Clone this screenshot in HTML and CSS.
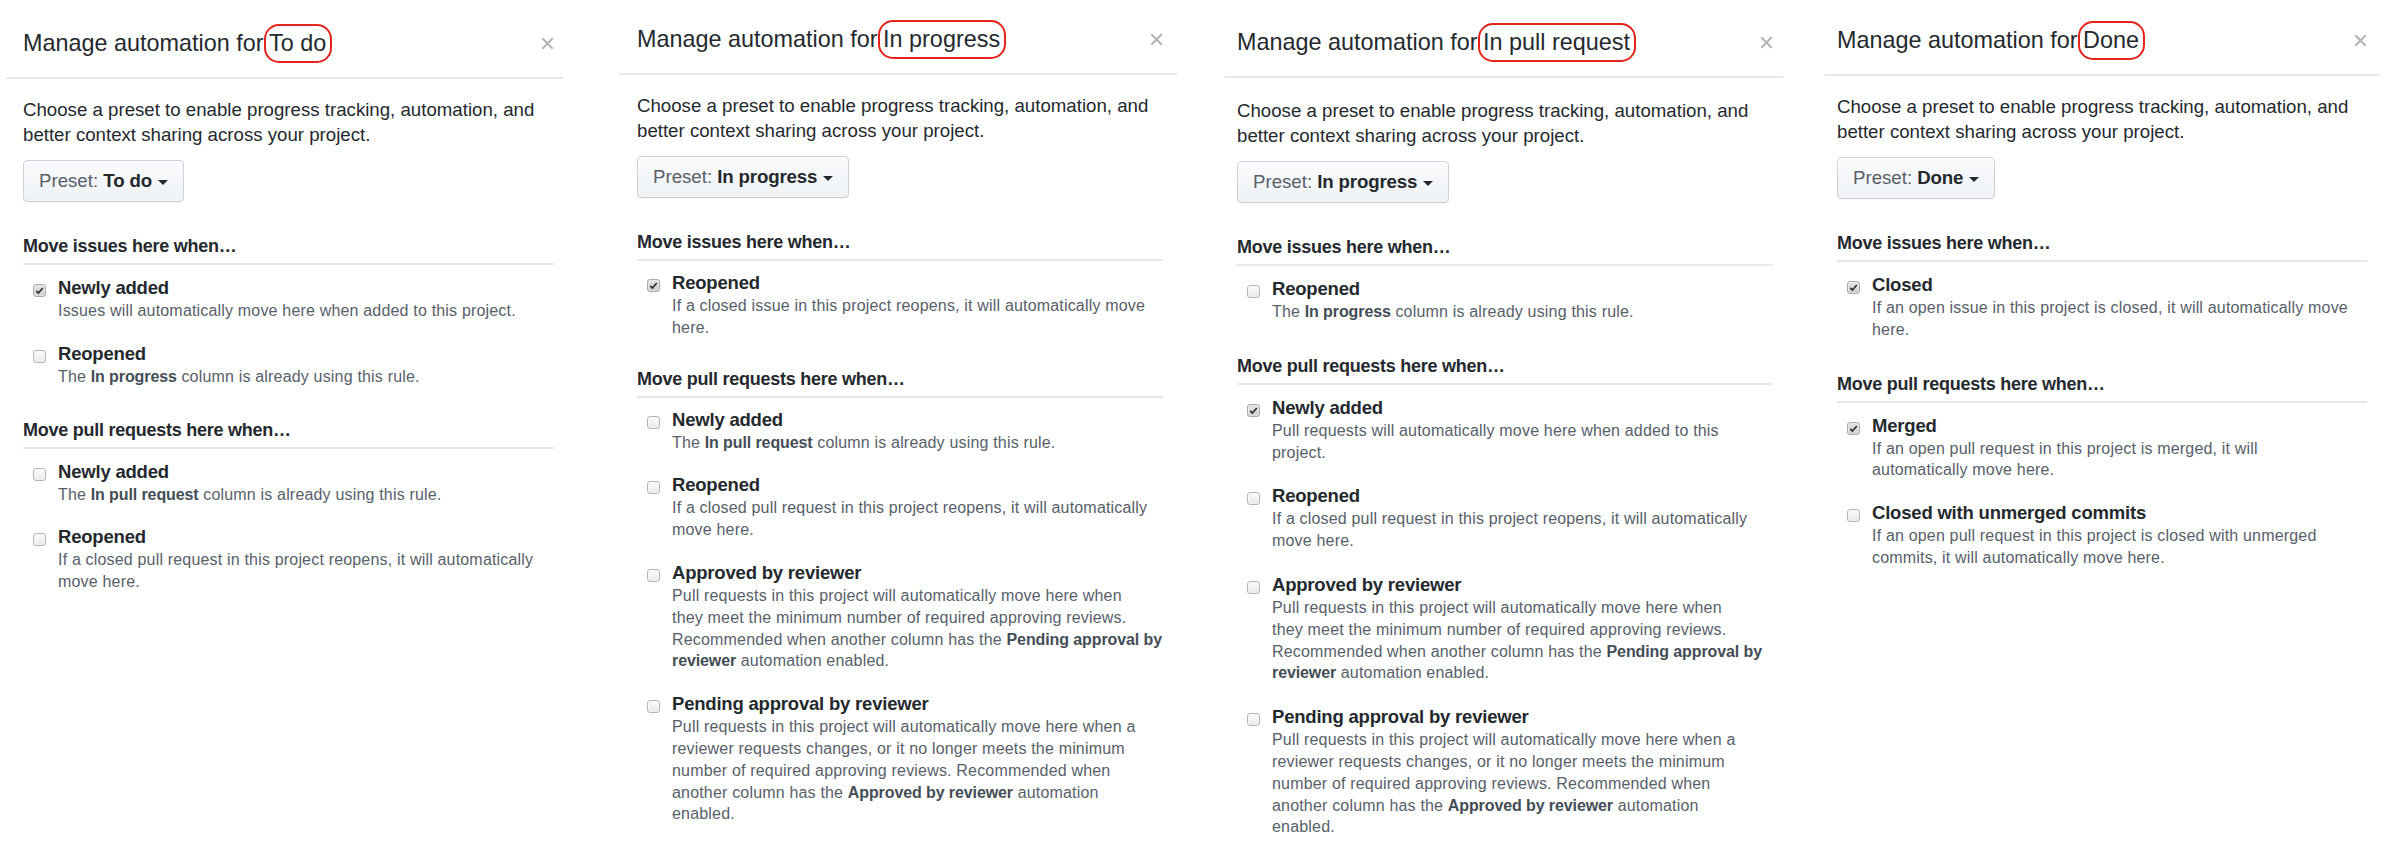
FILE: index.html
```html
<!DOCTYPE html>
<html lang="en">
<head>
<meta charset="utf-8">
<title>Manage automation</title>
<link rel="stylesheet" href="styles.css">
</head>
<body>
<div class="row">

  <section class="panel p1">
    <header class="head">
      <h2 class="title">Manage automation for <span class="hl">To do</span></h2>
      <svg class="close" width="13" height="13" viewBox="0 0 12 12" aria-hidden="true"><path d="M1.2 1.2L10.8 10.8M10.8 1.2L1.2 10.8"/></svg>
    </header>
    <div class="body">
      <p class="intro">Choose a preset to enable progress tracking, automation, and<br>better context sharing across your project.</p>
      <div class="preset"><span class="muted">Preset:</span>&nbsp;<strong>To do</strong><span class="caret"></span></div>
      <div class="sec">
        <h3 class="sec-title">Move issues here when…</h3>
        <div class="list">
          <div class="item">
            <span class="cb on"><svg width="13" height="13" viewBox="0 0 13 13"><path d="M3.3 6.8l2.1 2.2 4.4-5"/></svg></span>
            <span class="label">Newly added</span>
            <p class="note">Issues will automatically move here when added to this project.</p>
          </div>
          <div class="item">
            <span class="cb"></span>
            <span class="label">Reopened</span>
            <p class="note">The <strong>In progress</strong> column is already using this rule.</p>
          </div>
        </div>
      </div>
      <div class="sec">
        <h3 class="sec-title">Move pull requests here when…</h3>
        <div class="list">
          <div class="item">
            <span class="cb"></span>
            <span class="label">Newly added</span>
            <p class="note">The <strong>In pull request</strong> column is already using this rule.</p>
          </div>
          <div class="item">
            <span class="cb"></span>
            <span class="label">Reopened</span>
            <p class="note">If a closed pull request in this project reopens, it will automatically<br>move here.</p>
          </div>
        </div>
      </div>
    </div>
  </section>

  <section class="panel p2">
    <header class="head">
      <h2 class="title">Manage automation for <span class="hl">In progress</span></h2>
      <svg class="close" width="13" height="13" viewBox="0 0 12 12" aria-hidden="true"><path d="M1.2 1.2L10.8 10.8M10.8 1.2L1.2 10.8"/></svg>
    </header>
    <div class="body">
      <p class="intro">Choose a preset to enable progress tracking, automation, and<br>better context sharing across your project.</p>
      <div class="preset"><span class="muted">Preset:</span>&nbsp;<strong>In progress</strong><span class="caret"></span></div>
      <div class="sec">
        <h3 class="sec-title">Move issues here when…</h3>
        <div class="list">
          <div class="item">
            <span class="cb on"><svg width="13" height="13" viewBox="0 0 13 13"><path d="M3.3 6.8l2.1 2.2 4.4-5"/></svg></span>
            <span class="label">Reopened</span>
            <p class="note">If a closed issue in this project reopens, it will automatically move<br>here.</p>
          </div>
        </div>
      </div>
      <div class="sec">
        <h3 class="sec-title">Move pull requests here when…</h3>
        <div class="list">
          <div class="item">
            <span class="cb"></span>
            <span class="label">Newly added</span>
            <p class="note">The <strong>In pull request</strong> column is already using this rule.</p>
          </div>
          <div class="item">
            <span class="cb"></span>
            <span class="label">Reopened</span>
            <p class="note">If a closed pull request in this project reopens, it will automatically<br>move here.</p>
          </div>
          <div class="item">
            <span class="cb"></span>
            <span class="label">Approved by reviewer</span>
            <p class="note">Pull requests in this project will automatically move here when<br>they meet the minimum number of required approving reviews.<br>Recommended when another column has the <strong>Pending approval by<br>reviewer</strong> automation enabled.</p>
          </div>
          <div class="item">
            <span class="cb"></span>
            <span class="label">Pending approval by reviewer</span>
            <p class="note">Pull requests in this project will automatically move here when a<br>reviewer requests changes, or it no longer meets the minimum<br>number of required approving reviews. Recommended when<br>another column has the <strong>Approved by reviewer</strong> automation<br>enabled.</p>
          </div>
        </div>
      </div>
    </div>
  </section>

  <section class="panel p3">
    <header class="head">
      <h2 class="title">Manage automation for <span class="hl">In pull request</span></h2>
      <svg class="close" width="13" height="13" viewBox="0 0 12 12" aria-hidden="true"><path d="M1.2 1.2L10.8 10.8M10.8 1.2L1.2 10.8"/></svg>
    </header>
    <div class="body">
      <p class="intro">Choose a preset to enable progress tracking, automation, and<br>better context sharing across your project.</p>
      <div class="preset"><span class="muted">Preset:</span>&nbsp;<strong>In progress</strong><span class="caret"></span></div>
      <div class="sec">
        <h3 class="sec-title">Move issues here when…</h3>
        <div class="list">
          <div class="item">
            <span class="cb"></span>
            <span class="label">Reopened</span>
            <p class="note">The <strong>In progress</strong> column is already using this rule.</p>
          </div>
        </div>
      </div>
      <div class="sec">
        <h3 class="sec-title">Move pull requests here when…</h3>
        <div class="list">
          <div class="item">
            <span class="cb on"><svg width="13" height="13" viewBox="0 0 13 13"><path d="M3.3 6.8l2.1 2.2 4.4-5"/></svg></span>
            <span class="label">Newly added</span>
            <p class="note">Pull requests will automatically move here when added to this<br>project.</p>
          </div>
          <div class="item">
            <span class="cb"></span>
            <span class="label">Reopened</span>
            <p class="note">If a closed pull request in this project reopens, it will automatically<br>move here.</p>
          </div>
          <div class="item">
            <span class="cb"></span>
            <span class="label">Approved by reviewer</span>
            <p class="note">Pull requests in this project will automatically move here when<br>they meet the minimum number of required approving reviews.<br>Recommended when another column has the <strong>Pending approval by<br>reviewer</strong> automation enabled.</p>
          </div>
          <div class="item">
            <span class="cb"></span>
            <span class="label">Pending approval by reviewer</span>
            <p class="note">Pull requests in this project will automatically move here when a<br>reviewer requests changes, or it no longer meets the minimum<br>number of required approving reviews. Recommended when<br>another column has the <strong>Approved by reviewer</strong> automation<br>enabled.</p>
          </div>
        </div>
      </div>
    </div>
  </section>

  <section class="panel p4">
    <header class="head">
      <h2 class="title">Manage automation for <span class="hl">Done</span></h2>
      <svg class="close" width="13" height="13" viewBox="0 0 12 12" aria-hidden="true"><path d="M1.2 1.2L10.8 10.8M10.8 1.2L1.2 10.8"/></svg>
    </header>
    <div class="body">
      <p class="intro">Choose a preset to enable progress tracking, automation, and<br>better context sharing across your project.</p>
      <div class="preset"><span class="muted">Preset:</span>&nbsp;<strong>Done</strong><span class="caret"></span></div>
      <div class="sec">
        <h3 class="sec-title">Move issues here when…</h3>
        <div class="list">
          <div class="item">
            <span class="cb on"><svg width="13" height="13" viewBox="0 0 13 13"><path d="M3.3 6.8l2.1 2.2 4.4-5"/></svg></span>
            <span class="label">Closed</span>
            <p class="note">If an open issue in this project is closed, it will automatically move<br>here.</p>
          </div>
        </div>
      </div>
      <div class="sec">
        <h3 class="sec-title">Move pull requests here when…</h3>
        <div class="list">
          <div class="item">
            <span class="cb on"><svg width="13" height="13" viewBox="0 0 13 13"><path d="M3.3 6.8l2.1 2.2 4.4-5"/></svg></span>
            <span class="label">Merged</span>
            <p class="note">If an open pull request in this project is merged, it will<br>automatically move here.</p>
          </div>
          <div class="item">
            <span class="cb"></span>
            <span class="label">Closed with unmerged commits</span>
            <p class="note">If an open pull request in this project is closed with unmerged<br>commits, it will automatically move here.</p>
          </div>
        </div>
      </div>
    </div>
  </section>

</div>
</body>
</html>
```

FILE: styles.css
```css
html, body {
  margin: 0;
  padding: 0;
  background: #ffffff;
}

body {
  font-family: "Liberation Sans", Arial, Helvetica, sans-serif;
  color: #24292e;
}

.row {
  display: flex;
  align-items: flex-start;
  width: 2406px;
}

.panel {
  flex: none;
  --pl: 17px;
  --pr: 9px;
}

.p1 { margin-left: 6px;  width: 557px; margin-top: 4px; --pl: 17px; --pr: 9px; }
.p2 { margin-left: 56px; width: 558px; margin-top: 0;   --pl: 18px; --pr: 14px; }
.p3 { margin-left: 48px; width: 558px; margin-top: 5px; --pl: 12px; --pr: 10px; }
.p4 { margin-left: 42px; width: 555px; margin-top: 1px; --pl: 12px; --pr: 13px; }

/* header */
.head {
  display: flex;
  align-items: center;
  justify-content: space-between;
  padding: 24px var(--pr) 19px var(--pl);
  border-bottom: 2px solid #e6e8eb;
}

.p3 .head {
  padding-top: 22px;
}

.title {
  margin: 0;
  font-size: 23.4px;
  font-weight: 400;
  line-height: 30px;
  color: #24292e;
  white-space: nowrap;
}

.hl {
  display: inline-block;
  line-height: 27px;
  padding: 4px 4px 4px 3px;
  margin: -5px 0 -5px -6px;
  border: 2.5px solid #e5231d;
  border-radius: 15px;
}

.close {
  flex: none;
  display: block;
}

.close path {
  fill: none;
  stroke: #b3b3b3;
  stroke-width: 1.8;
}

/* body */
.body {
  display: flex;
  flex-direction: column;
  align-items: stretch;
  padding: 19px var(--pr) 0 var(--pl);
}

.p3 .body {
  padding-top: 21px;
}

.intro {
  margin: 0;
  font-size: 18.67px;
  line-height: 24.5px;
  color: #24292e;
}

.preset {
  align-self: flex-start;
  display: flex;
  align-items: center;
  margin-top: 13px;
  padding: 8px 15px;
  font-size: 18.67px;
  line-height: 24px;
  color: #24292e;
  background: linear-gradient(#fafbfc, #eff3f6 90%);
  border: 1px solid #cfd3d8;
  border-radius: 4px;
  box-shadow: 0 1px 0 rgba(27, 31, 35, 0.04);
  white-space: nowrap;
}

.preset .muted {
  color: #586069;
}

.preset strong {
  font-weight: 700;
  letter-spacing: -0.15px;
}

.caret {
  display: inline-block;
  width: 0;
  height: 0;
  margin-left: 6px;
  margin-top: 2px;
  border-top: 5.5px solid #24292e;
  border-left: 5.5px solid transparent;
  border-right: 5.5px solid transparent;
}

/* sections */
.sec {
  margin-top: 30px;
}

.preset + .sec {
  margin-top: 32px;
}

.p2 .sec + .sec {
  margin-top: 28px;
}

.p3 .sec + .sec,
.p4 .sec + .sec {
  margin-top: 31px;
}

.sec-title {
  margin: 0;
  padding-bottom: 5px;
  font-size: 18px;
  font-weight: 700;
  line-height: 24px;
  letter-spacing: -0.25px;
  color: #24292e;
  border-bottom: 2px solid #e6e8eb;
}

.list {
  display: flex;
  flex-direction: column;
  gap: 20px;
  padding-top: 11px;
}

.p2 .list {
  padding-top: 10px;
}

.p3 .list {
  gap: 21px;
}

.item {
  display: grid;
  grid-template-columns: 13px 1fr;
  column-gap: 12px;
  padding-left: 10px;
}

.cb {
  grid-column: 1;
  grid-row: 1;
  align-self: start;
  box-sizing: border-box;
  width: 13px;
  height: 13px;
  margin-top: 8px;
  border: 1px solid #b5b5b5;
  border-radius: 3px;
  background: linear-gradient(#fbfbfb, #e9e9e9);
  box-shadow: inset 0 0 0 0.5px rgba(255, 255, 255, 0.6);
  overflow: hidden;
}

.cb svg {
  display: block;
  margin: -1px 0 0 -1px;
}

.cb.on {
  background: linear-gradient(#e4e4e4, #cfcfcf);
  border-color: #a9a9a9;
}

.cb path {
  fill: none;
  stroke: #2f2f2f;
  stroke-width: 1.7;
}

.label {
  grid-column: 2;
  grid-row: 1;
  font-size: 18.5px;
  font-weight: 700;
  line-height: 24px;
  letter-spacing: -0.2px;
  color: #24292e;
  white-space: nowrap;
}

.note {
  grid-column: 2;
  grid-row: 2;
  margin: 0;
  font-size: 16px;
  line-height: 21.8px;
  letter-spacing: 0.18px;
  color: #586069;
  white-space: nowrap;
}

.note strong {
  font-weight: 700;
  letter-spacing: -0.1px;
  color: #444d56;
}
```
